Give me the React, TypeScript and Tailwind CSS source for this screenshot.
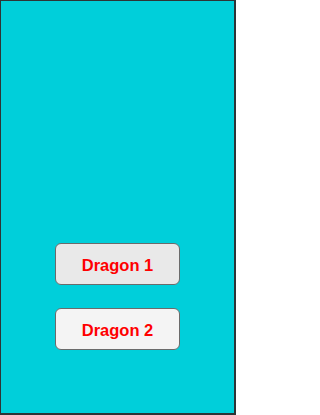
import React from "react";

const DRAGONS = [
  { label: "Dragon 1", bg: "bg-[#e9e9e9]" },
  { label: "Dragon 2", bg: "bg-[#f4f4f4]" },
];

export default function App() {
  return (
    <div
      className="w-[236px] h-[415px] bg-[#00cfda] border-l border-t border-r-2 border-b-2 border-[#2e3436] flex flex-col items-center justify-end gap-[23px] pb-[63px]"
      style={{ fontFamily: '"Liberation Sans", Arial, sans-serif' }}
    >
      {DRAGONS.map(d => (
        <button
          key={d.label}
          className={`w-[125px] h-[42px] ${d.bg} border border-[#6b6b6b] rounded-[6px] text-[#ff0000] font-bold text-[16.5px] pt-[2px]`}
        >
          {d.label}
        </button>
      ))}
    </div>
  );
}
